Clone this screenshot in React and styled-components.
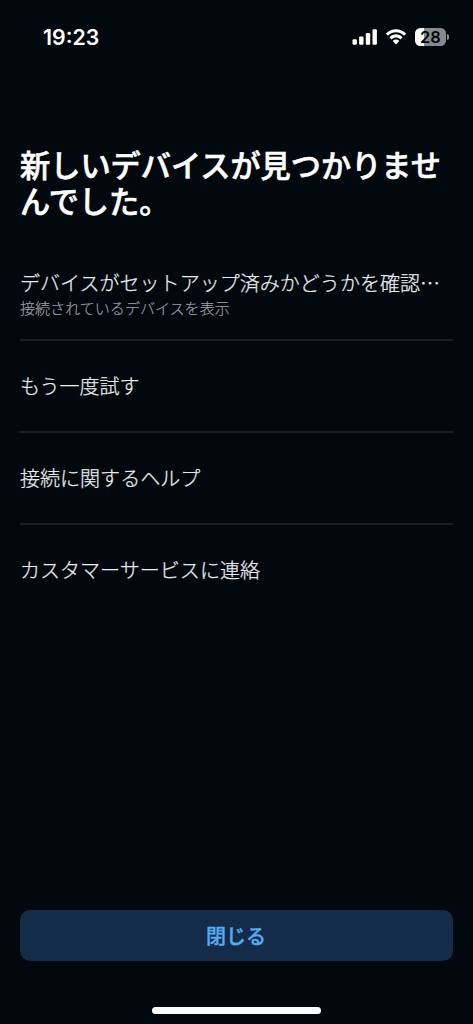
import styled, { createGlobalStyle } from "styled-components";

const items = [
  {
    title: "デバイスがセットアップ済みかどうかを確認…",
    subtitle: "接続されているデバイスを表示",
  },
  { title: "もう一度試す" },
  { title: "接続に関するヘルプ" },
  { title: "カスタマーサービスに連絡" },
];

function StatusBar() {
  return (
    <StatusContainer>
      <Time>19:23</Time>
      <StatusIcons>
        <svg width="25" height="16" viewBox="0 0 25 16" fill="#fff">
          <rect x="0.5" y="10.3" width="4.4" height="5.4" rx="1.2" />
          <rect x="7.1" y="7.5" width="4.4" height="8.2" rx="1.2" />
          <rect x="13.8" y="4" width="4.4" height="11.7" rx="1.2" />
          <rect x="20.5" y="0.2" width="4.4" height="15.5" rx="1.2" />
        </svg>
        <svg width="22" height="16" viewBox="0 0 22 16" fill="#fff">
          <path d="M11 3.3c2.9 0 5.6 1.1 7.7 3.1.2.2.4.2.6 0l1.5-1.5c.2-.2.2-.5 0-.7C15.3-1.1 6.7-1.1 1.2 4.2c-.2.2-.2.5 0 .7l1.5 1.5c.2.2.4.2.6 0C5.4 4.4 8.1 3.3 11 3.3z" />
          <path d="M11 8.6c1.6 0 3.1.6 4.2 1.6.2.2.4.2.6 0l1.6-1.6c.2-.2.2-.5 0-.7-3.7-3.4-9.1-3.4-12.8 0-.2.2-.2.5 0 .7l1.6 1.6c.2.2.4.2.6 0C7.9 9.2 9.4 8.6 11 8.6z" />
          <path d="M14 12.3c.2-.2.2-.5 0-.7-1.700-1.500-4.300-1.500-6 0-.2.2-.2.5 0 .7l2.7 2.9c.2.2.4.2.6 0z" />
        </svg>
        <Battery>
          <BatteryBody>28</BatteryBody>
          <BatteryTip />
        </Battery>
      </StatusIcons>
    </StatusContainer>
  );
}

function App() {
  return (
    <>
      <GlobalStyle />
      <Screen>
        <StatusBar />
        <Title>新しいデバイスが見つかりませんでした。</Title>
        <List>
          {items.map((item) => (
            <Item key={item.title}>
              <ItemTitle>{item.title}</ItemTitle>
              {item.subtitle && <ItemSubtitle>{item.subtitle}</ItemSubtitle>}
            </Item>
          ))}
        </List>
        <CloseButton>閉じる</CloseButton>
        <HomeIndicator />
      </Screen>
    </>
  );
}

export default App;

const GlobalStyle = createGlobalStyle`
  * {
    box-sizing: border-box;
  }

  body {
    margin: 0;
    background-color: #01090f;
    font-family: "Noto Sans CJK JP", sans-serif;
  }
`;

const Screen = styled.main`
  display: flex;
  flex-direction: column;
  height: 1024px;
  padding: 0 20px 10px;
  overflow: hidden;
  color: #fff;
`;

const StatusContainer = styled.header`
  display: flex;
  align-items: center;
  justify-content: space-between;
  flex: none;
  height: 74px;
  padding: 0 4px 0 23px;
  font-family: Inter, sans-serif;
`;

const Time = styled.span`
  font-size: 21.3px;
  font-weight: 600;
`;

const StatusIcons = styled.div`
  display: flex;
  align-items: center;
  gap: 8px;
`;

const Battery = styled.div`
  display: flex;
  align-items: center;
  gap: 1px;
`;

const BatteryBody = styled.div`
  width: 31px;
  height: 18px;
  border-radius: 5.5px;
  background: linear-gradient(to right, #fff 28%, #88898d 28%);
  color: #01090f;
  font-size: 16.5px;
  font-weight: 600;
  line-height: 18px;
  text-align: center;
`;

const BatteryTip = styled.div`
  width: 2px;
  height: 6px;
  border-radius: 0 2px 2px 0;
  background-color: #88898d;
`;

const Title = styled.h1`
  margin: 72px -5px 0 0;
  font-size: 30.2px;
  font-weight: 500;
  line-height: 36px;
  -webkit-text-stroke: 0.6px #fff;
`;

const List = styled.ul`
  margin: 31px 0 0;
  padding: 0;
  list-style: none;
`;

const Item = styled.li`
  display: flex;
  flex-direction: column;
  justify-content: center;
  height: 92px;
  border-bottom: 2px solid #191f26;

  &:last-child {
    border-bottom-color: transparent;
  }
`;

const ItemTitle = styled.span`
  color: #e8eaeb;
  font-size: 20.04px;
  font-weight: 300;
  line-height: 26px;
  white-space: nowrap;
  -webkit-text-stroke: 0.25px #e8eaeb;
`;

const ItemSubtitle = styled.span`
  padding-top: 1px;
  color: #9a9ea2;
  font-size: 15.05px;
  font-weight: 300;
  line-height: 22px;
  -webkit-text-stroke: 0.2px #9a9ea2;
`;

const CloseButton = styled.button`
  flex: none;
  height: 51px;
  margin-top: auto;
  padding: 0 1px 0 0;
  border: none;
  border-radius: 10px;
  background-color: #142b49;
  color: #55aaf0;
  font-family: inherit;
  font-size: 20px;
  font-weight: 500;
  -webkit-text-stroke: 0.4px #55aaf0;
`;

const HomeIndicator = styled.div`
  flex: none;
  align-self: center;
  width: 169px;
  height: 7px;
  margin-top: 46px;
  border-radius: 4px;
  background-color: #fff;
`;
